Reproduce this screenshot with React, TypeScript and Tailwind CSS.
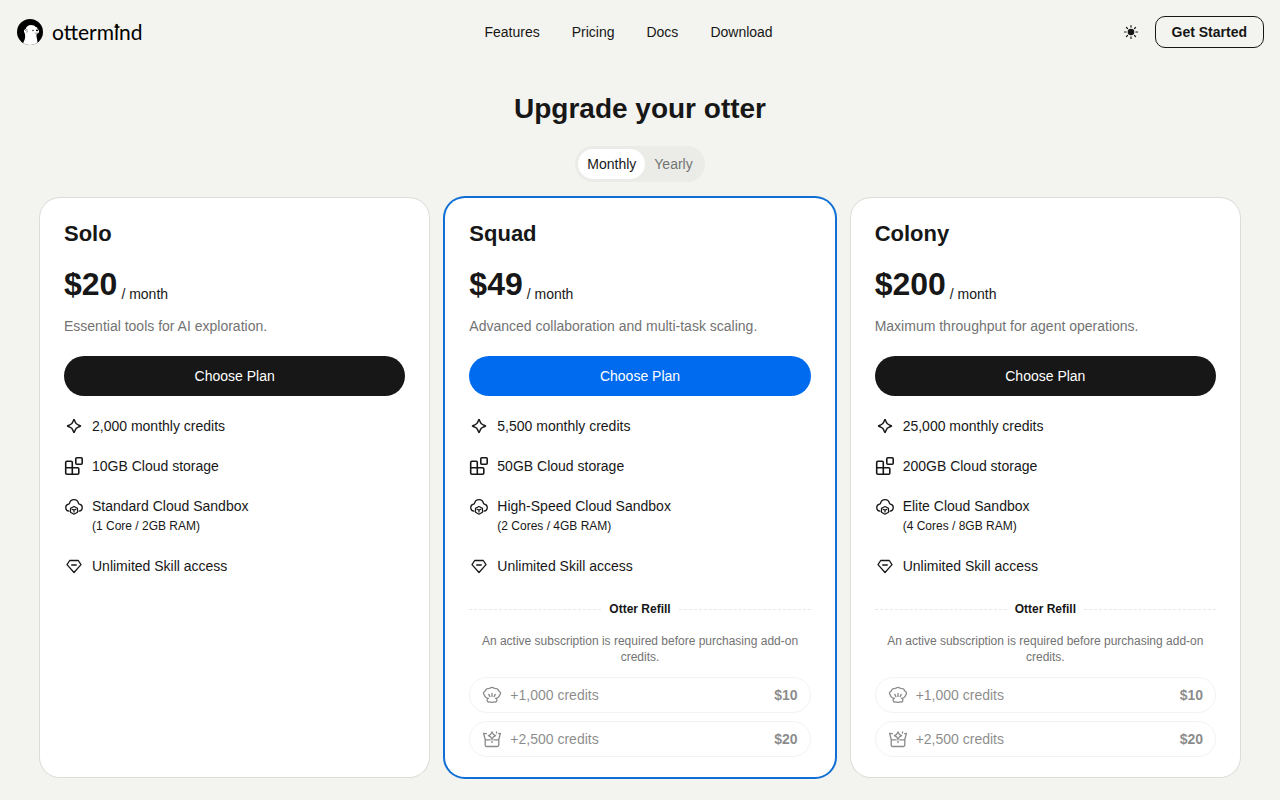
import { useState } from "react";
import type { ReactNode } from "react";

type Plan = {
  name: string;
  monthly: number;
  description: string;
  credits: string;
  storage: string;
  sandbox: string;
  specs: string;
  featured?: boolean;
  refill?: boolean;
};

const plans: Plan[] = [
  {
    name: "Solo",
    monthly: 20,
    description: "Essential tools for AI exploration.",
    credits: "2,000 monthly credits",
    storage: "10GB Cloud storage",
    sandbox: "Standard Cloud Sandbox",
    specs: "(1 Core / 2GB RAM)",
  },
  {
    name: "Squad",
    monthly: 49,
    description: "Advanced collaboration and multi-task scaling.",
    credits: "5,500 monthly credits",
    storage: "50GB Cloud storage",
    sandbox: "High-Speed Cloud Sandbox",
    specs: "(2 Cores / 4GB RAM)",
    featured: true,
    refill: true,
  },
  {
    name: "Colony",
    monthly: 200,
    description: "Maximum throughput for agent operations.",
    credits: "25,000 monthly credits",
    storage: "200GB Cloud storage",
    sandbox: "Elite Cloud Sandbox",
    specs: "(4 Cores / 8GB RAM)",
    refill: true,
  },
];

function Icon({ children }: { children: ReactNode }) {
  return (
    <svg
      viewBox="0 0 20 20"
      className="size-5 shrink-0"
      fill="none"
      stroke="currentColor"
      strokeWidth="1.5"
      strokeLinecap="round"
      strokeLinejoin="round"
      aria-hidden="true"
    >
      {children}
    </svg>
  );
}

function SparkIcon() {
  return (
    <Icon>
      <path d="M10 3.4c.4 0 .6 1 1.100 2.400.6 1.800 1.300 2.500 3.100 3.100 1.400.5 2.400.7 2.400 1.100s-1 .6-2.400 1.100c-1.800.6-2.500 1.300-3.100 3.100-.5 1.400-.7 2.400-1.100 2.400s-.6-1-1.100-2.400c-.6-1.800-1.300-2.500-3.100-3.100-1.400-.5-2.400-.7-2.400-1.100s1-.6 2.400-1.100c1.800-.6 2.500-1.300 3.100-3.100.5-1.400.7-2.400 1.100-2.400Z" />
    </Icon>
  );
}

function BlocksIcon() {
  return (
    <Icon>
      <g strokeWidth="1.600">
        <rect x="11.800" y="1.800" width="6.400" height="6.400" rx="1" />
        <path d="M8.300 11.800V6.500a1.200 1.200 0 0 0-1.200-1.200H2.900A1.200 1.200 0 0 0 1.700 6.500v10.600a1.200 1.200 0 0 0 1.200 1.200h10.700a1.200 1.200 0 0 0 1.200-1.200V13a1.200 1.200 0 0 0-1.200-1.200H1.700M8.300 11.800v6.500" />
      </g>
    </Icon>
  );
}

function CloudIcon() {
  return (
    <Icon>
      <path
        d="M5 15.200a3.600 3.600 0 0 1-.4-7.100c.6-.1.900-.3 1-.9a4.500 4.500 0 0 1 8.800 0c.1.600.4.800 1 .9a3.600 3.600 0 0 1-.4 7.100"
        strokeWidth="1.300"
      />
      <path
        d="m10 10.500 3.500 1.700v4L10 18.200l-3.500-2v-4zM8.100 13.200l1.900.9 1.900-.9M10 14.100v2"
        strokeWidth="1.200"
      />
    </Icon>
  );
}

function GemIcon() {
  return (
    <Icon>
      <path d="M5.700 4.500h8.600L17 8.600l-7 7.900-7-7.900zM7.700 9h4.600" strokeWidth="1.300" />
    </Icon>
  );
}

function ShellIcon() {
  return (
    <Icon>
      <g strokeWidth="1.300">
        <path d="M6.200 13.300c-2-.2-3.300-1.200-3.800-2.900-.3-1.100-1.200-1.200-.9-2.600.3-1.200 1.400-1.200 1.900-2.100.5-.9.700-2 2-2.100 1-.1 1.500.1 2.200-.3.900-.5 1.400-.9 2.400-.9s1.500.4 2.400.9c.7.4 1.200.2 2.200.3 1.300.1 1.500 1.200 2 2.100.5.900 1.600.9 1.900 2.100.3 1.400-.6 1.500-.9 2.600-.5 1.700-1.800 2.700-3.800 2.900" />
        <path d="M6.200 13.300c-1 .4-1.400 1.200-1 2.500.4 1.200 1.300 1.400 2.100 1.100.9-.4 1.600.4 2.700.4s1.800-.8 2.700-.4c.8.300 1.700.1 2.100-1.100.4-1.300 0-2.100-1-2.500M10 8.400v3M6.800 9.400l1.100 2.200M13.200 9.400l-1.100 2.200" />
      </g>
    </Icon>
  );
}

function ChestIcon() {
  return (
    <Icon>
      <g strokeWidth="1.300">
        <path d="M3.200 10.500v5.400a1.600 1.600 0 0 0 1.600 1.600h10.400a1.600 1.600 0 0 0 1.600-1.600v-5.400M3.200 10.500 1.600 4.300l2.700.4M16.800 10.500l1.600-6.200-1.700.3M3.200 10.800h5M11.800 10.800h5M10 12v1.500" />
        <path d="M10 2.900c.6 2.200 1.400 3 3.600 3.700-2.200.7-3 1.500-3.600 3.700-.6-2.200-1.400-3-3.600-3.700 2.200-.7 3-1.500 3.600-3.700ZM14.500 3v1" />
      </g>
    </Icon>
  );
}

function SunIcon() {
  return (
    <svg viewBox="0 0 16 16" className="size-4" aria-hidden="true">
      <circle cx="8" cy="8" r="3.300" fill="currentColor" />
      <path
        d="M8 1.500v1.600M8 12.900v1.600M1.500 8h1.600M12.900 8h1.600M3.400 3.400l1.100 1.100M11.500 11.500l1.100 1.100M3.400 12.600l1.100-1.100M11.500 4.500l1.100-1.100"
        stroke="currentColor"
        strokeWidth="1.200"
        strokeLinecap="round"
      />
    </svg>
  );
}

function Logo() {
  return (
    <a href="#" className="flex items-center gap-2">
      <svg viewBox="0 0 28 28" className="size-7" aria-hidden="true">
        <defs>
          <clipPath id="badge">
            <circle cx="14" cy="14" r="13" />
          </clipPath>
        </defs>
        <circle cx="14" cy="14" r="13" fill="#000" />
        <g clipPath="url(#badge)">
          <path
            d="M6.500 28c.2-3 2.300-5.500 2.600-8.500.2-1.800-.2-3-.4-4.600-.8-.6-1-1.900-.5-2.800.3-.5.800-.8 1.300-.8C10.100 8.600 12.300 7 15 7c2.100 0 3.900.8 5 2.300.9-.2 1.600.5 1.400 1.400.8.800 1.700 1.600 1.700 2.800 0 1.300-1 2-2.300 2.300-.5 1.300-.4 2.700 0 4.200.5 1.900.8 4.500.8 8z"
            fill="#fff"
          />
          <path
            d="M9.500 12.700c.1-1 1.300-1.300 1.900-.6M10.400 14c.4.200.8 0 1.100-.3"
            fill="none"
            stroke="#333"
            strokeWidth=".8"
          />
          <circle cx="17" cy="12.500" r=".7" />
          <ellipse cx="21" cy="12.400" rx="1.100" ry=".8" />
          <path d="M18.700 15c.9.400 1.900.3 2.700-.3" fill="none" stroke="#444" strokeWidth=".6" />
        </g>
      </svg>
      <span className="font-[Lato,sans-serif] text-[21px] leading-7 text-black">
        otterm
        <span className="relative">
          i
          <svg
            viewBox="0 0 8 8"
            className="absolute top-1 left-1/2 size-2 -translate-x-1/2"
            aria-hidden="true"
          >
            <path d="M4 .5 5 3l2.500 1L5 5 4 7.500 3 5 .5 4 3 3z" />
          </svg>
        </span>
        nd
      </span>
    </a>
  );
}

function Header() {
  return (
    <header className="flex h-16 items-center justify-between px-4">
      <Logo />
      <nav className="flex gap-8 text-sm">
        <a href="#features">Features</a>
        <a href="#pricing">Pricing</a>
        <a href="#docs">Docs</a>
        <a href="#download">Download</a>
      </nav>
      <div className="flex items-center gap-2">
        <button type="button" aria-label="Toggle theme" className="grid size-8 place-items-center">
          <SunIcon />
        </button>
        <button
          type="button"
          className="h-8 rounded-[10px] border border-[#171717] px-4 text-sm leading-5 font-bold"
        >
          Get Started
        </button>
      </div>
    </header>
  );
}

function Feature({ icon, children }: { icon: ReactNode; children: ReactNode }) {
  return (
    <li className="flex items-start gap-2">
      {icon}
      <div>{children}</div>
    </li>
  );
}

function RefillOption({ icon, label, price }: { icon: ReactNode; label: string; price: string }) {
  return (
    <button
      type="button"
      disabled
      className="flex h-9 w-full items-center gap-2 rounded-full border border-[#e8e8e8] px-3 text-sm opacity-50"
    >
      {icon}
      <span>{label}</span>
      <span className="ml-auto font-bold">{price}</span>
    </button>
  );
}

function Refill() {
  return (
    <div className="mt-[25px] text-center text-xs leading-4">
      <div className="flex items-center gap-2">
        <span className="grow border-t border-dashed border-[#e8e8e8]" />
        <h3 className="font-bold">Otter Refill</h3>
        <span className="grow border-t border-dashed border-[#e8e8e8]" />
      </div>
      <p className="mt-4 text-[#737373]">
        An active subscription is required before purchasing add-on credits.
      </p>
      <div className="mt-3 space-y-2">
        <RefillOption icon={<ShellIcon />} label="+1,000 credits" price="$10" />
        <RefillOption icon={<ChestIcon />} label="+2,500 credits" price="$20" />
      </div>
    </div>
  );
}

function PlanCard({ plan }: { plan: Plan }) {
  return (
    <section
      className={`rounded-[20px] bg-white px-6 pt-6 pb-5 ${
        plan.featured ? "ring-2 ring-[#0f6fd6]" : "ring-1 ring-[#dcdcd8]"
      }`}
    >
      <h2 className="text-[22px] leading-6 font-bold">{plan.name}</h2>
      <div className="mt-4 flex items-end gap-1">
        <span className="text-[32px] leading-11 font-bold">${plan.monthly}</span>
        <span className="pb-0.5 text-sm leading-5">/ month</span>
      </div>
      <p className="mt-2.5 text-sm leading-5 text-[#737373]">{plan.description}</p>
      <button
        type="button"
        className={`mt-5 h-10 w-full rounded-full text-sm text-white ${
          plan.featured ? "bg-[#006bee]" : "bg-[#171717]"
        }`}
      >
        Choose Plan
      </button>
      <ul className="mt-5 space-y-5 text-sm leading-5">
        <Feature icon={<SparkIcon />}>{plan.credits}</Feature>
        <Feature icon={<BlocksIcon />}>{plan.storage}</Feature>
        <Feature icon={<CloudIcon />}>
          {plan.sandbox}
          <p className="text-xs leading-5">{plan.specs}</p>
        </Feature>
        <Feature icon={<GemIcon />}>Unlimited Skill access</Feature>
      </ul>
      {plan.refill && <Refill />}
    </section>
  );
}

export default function App() {
  const [period, setPeriod] = useState("Monthly");

  return (
    <div className="min-h-screen bg-[#f3f4ef] font-['Liberation_Sans',Arial,sans-serif] text-[#171717]">
      <Header />
      <main className="px-10 pt-6 pb-[22px]">
        <h1 className="text-center text-[28px] leading-[42px] font-bold">Upgrade your otter</h1>
        <div className="mx-auto mt-4 flex h-9 w-fit rounded-full bg-[#ebece7] p-[3px] text-sm">
          {["Monthly", "Yearly"].map((name) => (
            <button
              key={name}
              type="button"
              aria-pressed={period === name}
              onClick={() => setPeriod(name)}
              className={`rounded-full px-[9px] ${
                period === name ? "bg-white" : "text-[#737373]"
              }`}
            >
              {name}
            </button>
          ))}
        </div>
        <div className="mt-4 grid grid-cols-3 gap-4">
          {plans.map((plan) => (
            <PlanCard key={plan.name} plan={plan} />
          ))}
        </div>
      </main>
    </div>
  );
}
